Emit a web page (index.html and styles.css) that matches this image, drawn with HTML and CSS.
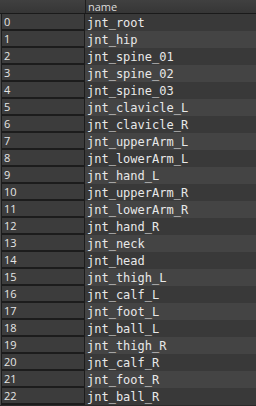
FILE: index.html
```html
<!DOCTYPE html>
<html>
<head>
<meta charset="utf-8">
<link rel="stylesheet" href="styles.css">
</head>
<body>
<div class="table">
  <div class="head">
    <div class="corner"></div>
    <div class="hname">name</div>
  </div>
  <div class="row"><div class="idx">0</div><div class="nm">jnt_root</div></div>
  <div class="row"><div class="idx">1</div><div class="nm">jnt_hip</div></div>
  <div class="row"><div class="idx">2</div><div class="nm">jnt_spine_01</div></div>
  <div class="row"><div class="idx">3</div><div class="nm">jnt_spine_02</div></div>
  <div class="row"><div class="idx">4</div><div class="nm">jnt_spine_03</div></div>
  <div class="row"><div class="idx">5</div><div class="nm">jnt_clavicle_L</div></div>
  <div class="row"><div class="idx">6</div><div class="nm">jnt_clavicle_R</div></div>
  <div class="row"><div class="idx">7</div><div class="nm">jnt_upperArm_L</div></div>
  <div class="row"><div class="idx">8</div><div class="nm">jnt_lowerArm_L</div></div>
  <div class="row"><div class="idx">9</div><div class="nm">jnt_hand_L</div></div>
  <div class="row"><div class="idx">10</div><div class="nm">jnt_upperArm_R</div></div>
  <div class="row"><div class="idx">11</div><div class="nm">jnt_lowerArm_R</div></div>
  <div class="row"><div class="idx">12</div><div class="nm">jnt_hand_R</div></div>
  <div class="row"><div class="idx">13</div><div class="nm">jnt_neck</div></div>
  <div class="row"><div class="idx">14</div><div class="nm">jnt_head</div></div>
  <div class="row"><div class="idx">15</div><div class="nm">jnt_thigh_L</div></div>
  <div class="row"><div class="idx">16</div><div class="nm">jnt_calf_L</div></div>
  <div class="row"><div class="idx">17</div><div class="nm">jnt_foot_L</div></div>
  <div class="row"><div class="idx">18</div><div class="nm">jnt_ball_L</div></div>
  <div class="row"><div class="idx">19</div><div class="nm">jnt_thigh_R</div></div>
  <div class="row"><div class="idx">20</div><div class="nm">jnt_calf_R</div></div>
  <div class="row"><div class="idx">21</div><div class="nm">jnt_foot_R</div></div>
  <div class="row"><div class="idx">22</div><div class="nm">jnt_ball_R</div></div>
</div>
</body>
</html>
```
FILE: styles.css
```css
html, body {
  margin: 0;
  padding: 0;
  background: #2a2a2a;
  overflow: hidden;
}
.table {
  width: 256px;
  height: 406px;
  display: flex;
  flex-direction: column;
}
.head {
  display: grid;
  grid-template-columns: 86px 1fr;
  height: 13px;
  border-bottom: 1px solid #1a1a1a;
  background: linear-gradient(#404040, #363636);
}
.corner {
  border-right: 1px solid #1f1f1f;
}
.hname {
  font-family: "Open Sans", "Noto Sans", sans-serif;
  font-size: 11px;
  line-height: 13px;
  color: #dcdcdc;
  padding-left: 2px;
}
.row {
  display: grid;
  grid-template-columns: 86px 1fr;
  height: 17px;
  background: #393939;
  overflow: hidden;
}
.row:nth-child(odd) {
  background: #444444;
}
.idx {
  box-sizing: border-box;
  height: 17px;
  margin-right: 1px;
  border-left: 1px solid #4c4c4c;
  box-shadow: inset 1px 0 0 #1c1c1c, inset -1px 0 0 #1c1c1c, inset 0 -2px 0 #1c1c1c;
  background: #3c3c3c;
  font-family: "Open Sans", "Noto Sans", sans-serif;
  font-size: 11px;
  line-height: 16px;
  color: #e6e6e6;
  padding-left: 3px;
}
.nm {
  font-family: "DejaVu Sans Mono", monospace;
  font-size: 12px;
  line-height: 16px;
  padding-top: 1px;
  color: #e8e8e8;
  padding-left: 1px;
}
```
